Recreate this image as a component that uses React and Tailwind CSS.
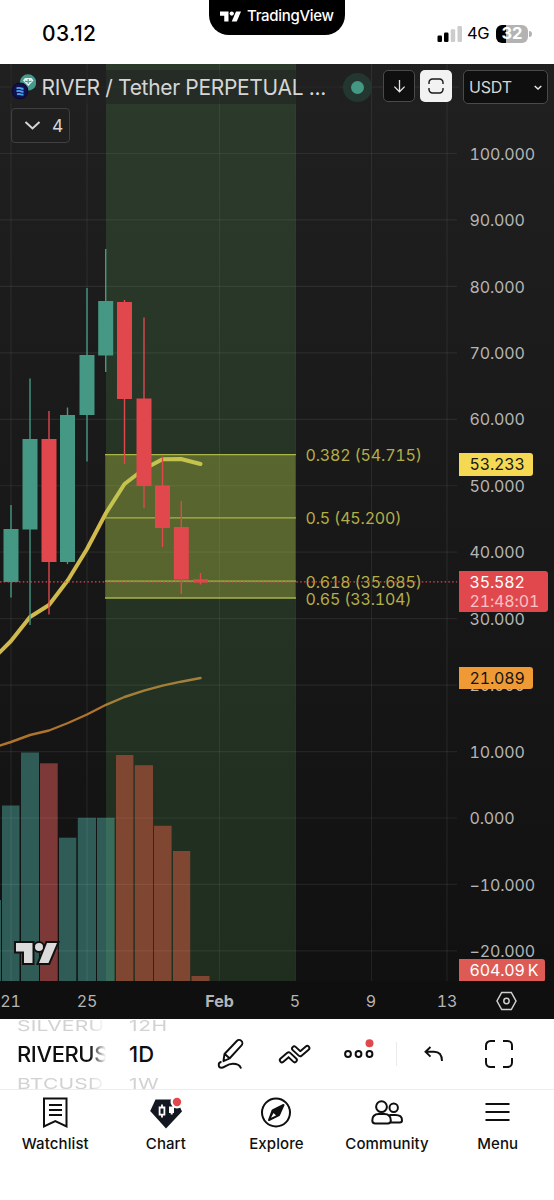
import React from 'react';

const UP = '#459883';
const DOWN = '#e0484d';

// x, wick high, body top, body bottom, wick low, color
const candles = [
  [11, 505, 529, 582, 597.5, UP],
  [30, 378.5, 439, 529.5, 625, UP],
  [49, 411, 439, 562, 614.5, DOWN],
  [67.5, 407.5, 415, 562, 564, UP],
  [87, 288, 355, 415, 461.5, UP],
  [105.7, 249, 301, 355.5, 372, UP],
  [124.5, 300, 302, 399, 464, DOWN],
  [144, 317.5, 398.5, 486, 508, DOWN],
  [162.5, 456.5, 485.5, 528, 547, DOWN],
  [181.3, 501, 527, 579.5, 594, DOWN],
  [200.5, 573, 579.3, 582.5, 584.5, DOWN],
];

// x, width, top, fill
const volumes = [
  [0, 1, 900, '#2f5c57'],
  [2, 17.5, 805.5, '#2f5c57'],
  [21, 18, 752.5, '#2f5c57'],
  [40, 17.7, 763.3, '#7d3838'],
  [59, 17.3, 837.7, '#2f5c57'],
  [77.8, 18.2, 817.8, '#2f5c57'],
  [97, 17.6, 817.8, '#2f5c57'],
  [116, 17.4, 755, '#832e26'],
  [134.8, 18.2, 765.2, '#832e26'],
  [154, 17.6, 825.8, '#832e26'],
  [173, 17.2, 851, '#832e26'],
  [191.5, 18, 976, '#832e26'],
];

const fibs = [
  [454.6, '0.382 (54.715)', 461, 116.5],
  [517.8, '0.5 (45.200)', 524, 96],
  [581.2, '0.618 (35.685)', 587.5, 116.5],
  [598, '0.65 (33.104)', 604.5, 106],
];

const prices = [
  '100.000', '90.000', '80.000', '70.000', '60.000', '50.000', '40.000',
  '30.000', '20.000', '10.000', '0.000', '−10.000', '−20.000',
];

const gridX = [11, 87, 219.5, 295.5, 371.5, 447];
const gridY = prices.map((_, i) => 153.5 + i * 66.45);

const TvLogo = ({ className, ...rest }) => (
  <svg viewBox="0 0 42 20" className={className} {...rest}>
    <path d="M0 0h17v20H8.500V8.500H0z" />
    <circle cx="23.500" cy="4.200" r="4.200" />
    <path d="M32 0h10l-8.500 20h-10z" />
  </svg>
);

const StatusBar = () => (
  <header className="relative flex h-16 items-start justify-between bg-white pl-[42px] pr-[22px] pt-[19px] text-black">
    <span className="text-[21px] font-medium leading-[29px] tracking-[0.4px]">03.12</span>
    <div className="absolute left-[209px] top-0 flex h-[34.500px] w-[136px] items-center rounded-b-[20px] bg-black pb-[2px] pl-[11px] text-white">
      <TvLogo className="h-[11px] w-[21px] shrink-0" fill="white" />
      <span className="ml-[6px] text-[15px] font-medium tracking-[-0.3px]">TradingView</span>
    </div>
    <div className="flex h-[29px] items-center">
      <svg className="mr-[4px] h-4 w-[26px]" viewBox="0 0 26 16">
        <rect x="0.500" y="9.500" width="4.500" height="6.500" rx="1.200" />
        <rect x="7" y="6.500" width="4.500" height="9.500" rx="1.200" />
        <rect x="13.700" y="3.200" width="4.500" height="12.800" rx="1.200" fill="#ccc" />
        <rect x="20.500" y="0" width="4.500" height="16" rx="1.200" fill="#ccc" />
      </svg>
      <span className="w-[29px] text-[16.500px] tracking-[-0.3px]">4G</span>
      <div className="flex h-[18px] w-8 items-center justify-center rounded-[6px] bg-[linear-gradient(90deg,#000_31%,#b3b3b3_31%)] text-[16.500px] font-bold leading-none text-white">
        32
      </div>
      <div className="ml-px h-[6px] w-[3px] rounded-r-full bg-[#b3b3b3]" />
    </div>
  </header>
);

const Plot = () => (
  <svg className="h-[917px] w-[459px] shrink-0 tabular-nums" viewBox="0 64 459 917">
    {/* Volume */}
    {volumes.map(([x, w, top, fill]) => (
      <rect key={x} x={x} y={top} width={w} height={981 - top} fill={fill} />
    ))}

    <g stroke="#fff" strokeOpacity="0.07" strokeWidth="1.200">
      {gridX.map((x) => <path key={x} d={`M${x} 64V981`} />)}
      <path d="M0 87H459" />
      {gridY.map((y) => <path key={y} d={`M0 ${y}H457`} />)}
    </g>

    {/* Moving averages */}
    <g fill="none" strokeLinejoin="round" strokeLinecap="round">
      <path d="M-2 746L11 742L30 735L49 730.500L68 723L87 714.500L106 704.800L124.500 697L144 690.700L162.500 685.700L181 681.700L200.500 678" stroke="#ae742e" strokeWidth="2.400" />
      <path d="M-2 654L11 641L30 617L49 605L68 580L87 549L106 513L124.500 484L144 469L162.500 459.300L181 459L200.500 464" stroke="#d0b94d" strokeWidth="4" />
    </g>

    {/* Date range and fib zone */}
    <rect x="106" y="64" width="189.500" height="917" fill="rgb(112,196,108)" fillOpacity="0.165" />
    <rect x="105" y="454.600" width="190.500" height="143.400" fill="rgb(205,215,70)" fillOpacity="0.3" />
    {fibs.map(([y, label, base, len]) => (
      <g key={label}>
        <path d={`M105 ${y}H296`} stroke="#abb548" strokeWidth="1.300" />
        <text x="305.500" y={base} textLength={len} fill="#b3ad48" fontSize="16">{label}</text>
      </g>
    ))}

    {candles.map(([x, high, top, bottom, low, color]) => (
      <g key={x} fill={color}>
        <rect x={x - 0.7} y={high} width="1.400" height={low - high} />
        <rect x={x - 7.5} y={top} width="15" height={bottom - top} />
      </g>
    ))}
    <path d="M0 581.900H457" stroke={DOWN} strokeWidth="1.200" strokeDasharray="1.500 2.300" />

    <g transform="translate(16 943)" stroke="#111" strokeWidth="4" fill="#dbdbdb">
      <path d="M0 0h16.500v20H8V8.500H0z M31 0h10l-8.500 20h-9.500z" />
      <circle cx="23" cy="4" r="4" />
    </g>
    <g transform="translate(16 943)" fill="#dbdbdb">
      <path d="M0 0h16.500v20H8V8.500H0z M31 0h10l-8.500 20h-9.500z" />
      <circle cx="23" cy="4" r="4" />
    </g>
  </svg>
);

const PriceScale = () => (
  <div className="relative w-[95px] pt-[56.500px] text-[16px] tabular-nums tracking-[-0.150px] text-[#b5b5b5]">
    {prices.map((p) => (
      <div key={p} className="flex h-[66.450px] items-center pl-[10.500px]">{p}</div>
    ))}
    <div className="absolute left-0 top-[389px] flex h-[22.500px] w-[73.500px] items-center rounded-r-[3px] bg-[#f5d952] pl-[10.500px] text-[#151515]">53.233</div>
    <div className="absolute left-0 top-[506.500px] h-[41.500px] w-[88.500px] rounded-r-[3px] bg-[#e0484d] pl-[10.500px] pt-[2px] leading-[19px] text-white">
      <div>35.582</div>
      <div className="text-[#f6c2c4]">21:48:01</div>
    </div>
    <div className="absolute left-0 top-[602.500px] flex h-[22.500px] w-[73.500px] items-center rounded-r-[3px] bg-[#f09a36] pl-[10.500px] text-[#151515]">21.089</div>
    <div className="absolute left-0 top-[895px] flex h-[22.500px] w-[86px] items-center rounded-r-[3px] bg-[#de5b55] pl-[10.500px] text-white">
      604.09<span className="ml-[3px]">K</span>
    </div>
  </div>
);

const TimeAxis = () => (
  <div className="relative h-[38px] bg-[#0f0f0f] text-[16px] tabular-nums leading-[40px] text-[#b5b5b5]">
    <span className="absolute left-[10.500px] -translate-x-1/2">21</span>
    <span className="absolute left-[87px] -translate-x-1/2">25</span>
    <span className="absolute left-[219.500px] -translate-x-1/2 font-bold">Feb</span>
    <span className="absolute left-[295px] -translate-x-1/2">5</span>
    <span className="absolute left-[371px] -translate-x-1/2">9</span>
    <span className="absolute left-[447px] -translate-x-1/2">13</span>
    <svg className="absolute left-[496px] top-[10px] h-5 w-[21px]" viewBox="0 0 21 20" fill="none" stroke="#cfcfcf" strokeWidth="1.500">
      <path d="M5.700 1.500h9.600L20 10l-4.700 8.500H5.700L1 10z" />
      <circle cx="10.500" cy="10" r="2.700" />
    </svg>
  </div>
);

const SymbolBar = () => (
  <div className="absolute inset-x-0 top-0 pt-[6px]">
    <div className="flex items-start">
      <div className="ml-[10px] flex h-[34px] w-[330px] items-center bg-[#202020]/55">
        <svg className="h-[26px] w-[26px] shrink-0" viewBox="0 0 26 26">
          <circle cx="18" cy="8.500" r="8.200" fill="#459a8d" />
          <path d="M13 6.500l2-2.500h6.500l2 2.500-5.200 5.500z" fill="#e6f3f0" />
          <path d="M15 7c2 1 4.500 1 6.500 0M18.200 5v5" stroke="#459a8d" strokeWidth="1.100" fill="none" />
          <circle cx="10" cy="17" r="8.400" fill="#0a0a2c" />
          <circle cx="10" cy="17" r="7.400" fill="#10104a" />
          <path d="M6.500 14.500c3-2 4 1 7 0M6.500 17.500c3-2 4 1 7 0M7 20.500c3-1.500 4 .8 6.500 0" stroke="#4ba3f2" strokeWidth="1.900" fill="none" />
        </svg>
        <span className="ml-[5.500px] mt-px whitespace-nowrap text-[21px] tracking-[-0.320px] text-[#d6d6d6]">RIVER / Tether PERPETUAL ...</span>
      </div>
      <div className="ml-[3px] mt-[3px] flex h-[29px] w-[29px] items-center justify-center rounded-full bg-[#243630]">
        <div className="h-[13.500px] w-[13.500px] rounded-full bg-[#459883]" />
      </div>
      <div className="ml-[11px] flex h-8 w-8 items-center justify-center rounded-[5px] border border-[#4a4a4a] bg-[#0f0f0f]">
        <svg className="h-[14px] w-[13px]" viewBox="0 0 14 15" fill="none" stroke="#e5e5e5" strokeWidth="1.400">
          <path d="M7 1v12.500M1.500 8.200L7 13.700l5.500-5.500" />
        </svg>
      </div>
      <div className="ml-[5px] flex h-8 w-8 items-center justify-center rounded-[5px] bg-[#f2f2f2]">
        <svg className="h-4 w-4" viewBox="0 0 16 16" fill="none" stroke="#1a1a1a" strokeWidth="1.400">
          <path d="M1 6V4.500A3.500 3.500 0 0 1 4.500 1h7A3.500 3.500 0 0 1 15 4.500V6M1 10v1.500A3.500 3.500 0 0 0 4.500 15h7a3.500 3.500 0 0 0 3.500-3.500V10" />
        </svg>
      </div>
      <div className="ml-[11px] flex h-[34px] w-[85px] items-center justify-between rounded-[5px] border border-[#4a4a4a] bg-[#0f0f0f] pl-[5px] pr-[5px] text-[16px] tracking-[-0.2px] text-[#d6d6d6]">
        USDT
        <svg className="h-[5px] w-2" viewBox="0 0 8 5" fill="none" stroke="#e5e5e5" strokeWidth="1.500">
          <path d="M.7 1L4 4l3.300-3" />
        </svg>
      </div>
    </div>
    <div className="ml-[11px] mt-[4px] flex h-[35px] w-[59px] items-center rounded-[4px] border border-[#404040] pl-[12px] pt-px text-[17.500px] text-[#d6d6d6]">
      <svg className="mr-[12px] h-[10px] w-[17px]" viewBox="0 0 17 10" fill="none" stroke="#d6d6d6" strokeWidth="2">
        <path d="M1.500 1l7 6.500L15.500 1" />
      </svg>
      <span className="-ml-px">4</span>
    </div>
  </div>
);

const Toolbar = () => (
  <div className="flex h-[71px] items-center border-b border-[#ededed] bg-white text-[#0f0f0f]">
    <div className="ml-[17px] flex h-full w-[89px] flex-col justify-center overflow-hidden whitespace-nowrap [mask-image:linear-gradient(90deg,#000_82%,transparent)]">
      <span className="h-[29px] origin-center scale-y-[0.7] text-[21px] leading-[29px] tracking-[0.2px] text-[#d2d2d2]">SILVERU</span>
      <span className="h-[29px] text-[22px] font-medium leading-[29px] tracking-[-0.4px]">RIVERUS</span>
      <span className="h-[29px] origin-center scale-y-[0.7] text-[21px] leading-[29px] tracking-[0.2px] text-[#d2d2d2]">BTCUSD</span>
    </div>
    <div className="ml-[23px] flex h-full w-[60px] flex-col justify-center overflow-hidden">
      <span className="h-[29px] scale-y-[0.7] text-[21px] leading-[29px] tracking-[0.6px] text-[#d2d2d2]">12H</span>
      <span className="h-[29px] text-[22px] font-medium leading-[29px] tracking-[0.1px]">1D</span>
      <span className="h-[29px] scale-y-[0.7] text-[21px] leading-[29px] tracking-[0.5px] text-[#d2d2d2]">1W</span>
    </div>
    <svg className="ml-[28px] h-[31px] w-[28px]" viewBox="217 1038 28 31" fill="none" stroke="#0f0f0f" strokeWidth="1.900" strokeLinejoin="round" strokeLinecap="round">
      <path d="M223.500 1059.500l1-6.500 12.300-13a3.200 3.200 0 0 1 4.700 4.400L229.500 1057.500l-6 2.700zM224.800 1053l4.700 4.300" />
      <path d="M220.800 1061c-3 1-2.800 6 1 5.800 3.500-.3 5-4 11-4 5 0 7 1.500 8 4" />
    </svg>
    <svg className="ml-[32px] h-[20px] w-[34px]" viewBox="277 1043 34 20" fill="none" strokeLinejoin="round" strokeLinecap="round">
      <path d="M282 1059.200l6.700-5.800 6 5.700M294.200 1047.500l6 5.600 7-6" stroke="#0f0f0f" strokeWidth="6.200" />
      <path d="M282 1059.200l6.700-5.800 6 5.700M294.200 1047.500l6 5.600 7-6" stroke="#fff" strokeWidth="2.400" />
    </svg>
    <svg className="ml-[31px] mb-[12px] h-[22px] w-[34px]" viewBox="342 1037 34 22" fill="none" stroke="#0f0f0f" strokeWidth="2">
      <circle cx="348" cy="1054" r="2.900" />
      <circle cx="358.500" cy="1054" r="2.900" />
      <circle cx="369.500" cy="1054" r="2.900" />
      <circle cx="369.500" cy="1043.200" r="4" fill={DOWN} stroke="none" />
    </svg>
    <div className="ml-[20px] h-6 w-px bg-[#ebebeb]" />
    <svg className="ml-[27px] h-[16px] w-[20px]" viewBox="424 1046 20 16" fill="none" stroke="#0f0f0f" strokeWidth="1.900">
      <path d="M430.500 1047l-5 4.700 5 5M425.500 1051.700H434q8 0 8 9.300" />
    </svg>
    <svg className="ml-[40.500px] h-[28px] w-[28px]" viewBox="0 0 28 28" fill="none" stroke="#0f0f0f" strokeWidth="2">
      <path d="M1 10V5.500A4.500 4.500 0 0 1 5.500 1H10M18 1h4.500A4.500 4.500 0 0 1 27 5.500V10M27 18v4.500a4.500 4.500 0 0 1-4.500 4.500H18M10 27H5.500A4.500 4.500 0 0 1 1 22.500V18" />
    </svg>
  </div>
);

const tabs = [
  {
    label: 'Watchlist',
    icon: <path d="M5 3.500h22.500v28L16.300 26 5 31.500zM10 10h13M10 15h13M10 20h13" />,
  },
  {
    label: 'Chart',
    icon: (
      <g stroke="none">
        <path d="M5.500 4.500h21L32 16.500 16 33.500.200 16z" fill="#131722" />
        <path d="M12 9.500v13" stroke="#fff" strokeWidth="1.800" />
        <path d="M9.600 12.500h4.800v7.200H9.600z" fill="#131722" stroke="#fff" strokeWidth="1.800" />
        <circle cx="27" cy="7" r="6.500" fill="#fff" />
        <path d="M19 11.500h5v6.500h-1.300v1.500h-2V18H19z" fill="#fff" />
        <circle cx="27" cy="7" r="4.200" fill={DOWN} />
      </g>
    ),
  },
  {
    label: 'Explore',
    icon: (
      <g>
        <circle cx="16" cy="17.500" r="14" />
        <path d="M23.500 10l-4.500 10L9 25l3.500-9.500z" fill="#0f0f0f" strokeLinejoin="round" />
        <path d="M13.500 18l2.500 2.500-5 2.300z" fill="#fff" stroke="none" />
      </g>
    ),
  },
  {
    label: 'Community',
    icon: (
      <g>
        <circle cx="10.500" cy="11.700" r="5.400" />
        <circle cx="22.700" cy="12.800" r="4.200" />
        <path d="M1.300 25.500c0-4.500 3-6.500 6.500-6.500h5.500c3.500 0 6.500 2 6.500 6.500 0 2-1 3-3 3H4.300c-2 0-3-1-3-3zM18.500 20h6c4 0 6.500 2 6.500 5.200 0 1.500-.7 2.300-2.200 2.300H19.500" />
      </g>
    ),
  },
  {
    label: 'Menu',
    icon: <path d="M3.500 9h24M3.500 17h24M3.500 25h24" />,
  },
];

const BottomNav = () => (
  <nav className="grid h-[110px] w-[553px] grid-cols-5 bg-white pt-[5px] text-[#0f0f0f]">
    {tabs.map((tab) => (
      <div key={tab.label} className="flex flex-col items-center">
        <svg className="h-[34px] w-8" viewBox="0 0 32 34" fill="none" stroke="#0f0f0f" strokeWidth="2">
          {tab.icon}
        </svg>
        <span className="mt-[4px] text-[15px] font-medium leading-[22px] tracking-[0.1px]">{tab.label}</span>
      </div>
    ))}
  </nav>
);

export default function App() {
  return (
    <div className="h-[1200px] w-[554px] overflow-hidden bg-white font-['Inter',sans-serif]">
      <StatusBar />
      <main className="relative h-[955px] bg-[linear-gradient(#202020,#101010)]">
        <div className="flex h-[917px] overflow-hidden">
          <Plot />
          <PriceScale />
        </div>
        <TimeAxis />
        <SymbolBar />
      </main>
      <Toolbar />
      <BottomNav />
    </div>
  );
}
